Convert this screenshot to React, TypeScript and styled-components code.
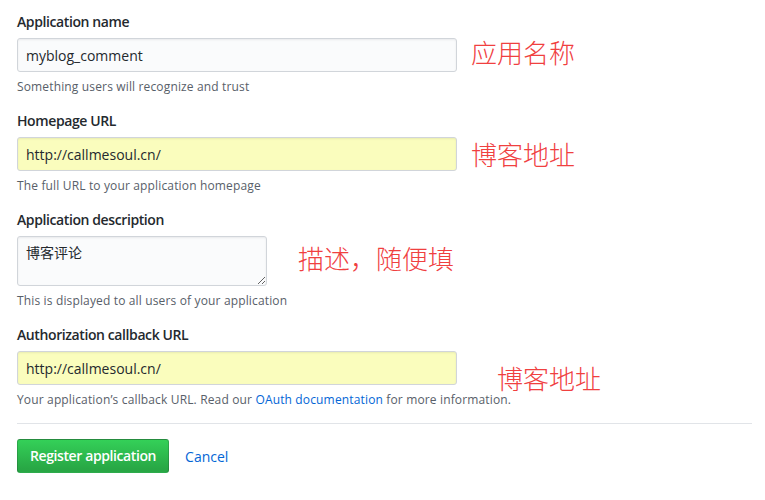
import React from "react";
import styled, { createGlobalStyle } from "styled-components";

const GlobalStyle = createGlobalStyle`
  html, body { margin: 0; padding: 0; background: #ffffff; }
  body {
    font-family: "Segoe UI", "Open Sans", "Noto Sans", "Noto Sans CJK SC", sans-serif;
    color: #24292e;
    font-size: 14px;
  }
`;

const Form = styled.form`
  width: 735px;
  margin-left: 17px;
  padding-top: 11px;
  display: flex;
  flex-direction: column;
`;

const Group = styled.div`
  display: flex;
  flex-direction: column;
  margin-bottom: 14px;
`;

const Label = styled.label`
  font-weight: 600;
  font-size: 14px;
  line-height: 21px;
  letter-spacing: -0.4px;
  margin-bottom: 6px;
  color: #24292e;
`;

const Row = styled.div`
  display: flex;
  align-items: center;
`;

const TextInput = styled.input<{ $autofill?: boolean }>`
  box-sizing: border-box;
  width: 440px;
  height: 34px;
  padding: 6px 8px;
  font: inherit;
  font-size: 14px;
  line-height: 20px;
  color: #24292e;
  background: ${(p) => (p.$autofill ? "#fafdbd" : "#fafbfc")};
  border: 1px solid #d1d5da;
  border-radius: 3px;
  box-shadow: inset 0 1px 2px rgba(27, 31, 35, 0.075);
  outline: none;
`;

const TextArea = styled.textarea`
  box-sizing: border-box;
  width: 250px;
  height: 50px;
  padding: 5px 8px;
  font: inherit;
  font-family: "Segoe UI", "Noto Sans CJK SC", sans-serif;
  font-size: 14px;
  line-height: 20px;
  color: #24292e;
  background: #fafbfc;
  border: 1px solid #d1d5da;
  border-radius: 3px;
  box-shadow: inset 0 1px 2px rgba(27, 31, 35, 0.075);
  outline: none;
  resize: both;
`;

const Annotation = styled.span<{ $gap: number; $shift?: number }>`
  margin-left: ${(p) => p.$gap}px;
  transform: translateY(${(p) => p.$shift ?? 0}px);
  font-family: "Noto Sans CJK SC", sans-serif;
  font-weight: 300;
  font-size: 26px;
  line-height: 30px;
  color: #f0403f;
  white-space: nowrap;
`;

const Note = styled.p`
  margin: 6px 0 0;
  font-size: 12px;
  line-height: 18px;
  letter-spacing: 0.15px;
  color: #586069;
`;

const Link = styled.a`
  color: #0366d6;
  text-decoration: none;
`;

const Divider = styled.hr`
  width: 100%;
  margin: 0 0 15px;
  border: 0;
  border-top: 1px solid #e1e4e8;
  height: 0;
`;

const Actions = styled.div`
  display: flex;
  align-items: center;
  gap: 16px;
`;

const PrimaryButton = styled.button`
  box-sizing: border-box;
  height: 34px;
  padding: 6px 12px;
  font: inherit;
  font-size: 14px;
  font-weight: 600;
  letter-spacing: -0.4px;
  line-height: 20px;
  color: #ffffff;
  background-image: linear-gradient(-180deg, #34d058 0%, #28a745 90%);
  border: 1px solid rgba(27, 31, 35, 0.2);
  border-radius: 3px;
  cursor: pointer;
`;

const CancelLink = styled.a`
  font-size: 14px;
  color: #0366d6;
  text-decoration: none;
`;

export default function App() {
  return (
    <>
      <GlobalStyle />
      <Form onSubmit={(e) => e.preventDefault()}>
        <Group>
          <Label>Application name</Label>
          <Row>
            <TextInput defaultValue="myblog_comment" />
            <Annotation $gap={14} $shift={-3}>应用名称</Annotation>
          </Row>
          <Note>Something users will recognize and trust</Note>
        </Group>
        <Group>
          <Label>Homepage URL</Label>
          <Row>
            <TextInput $autofill defaultValue="http://callmesoul.cn/" />
            <Annotation $gap={14}>博客地址</Annotation>
          </Row>
          <Note>The full URL to your application homepage</Note>
        </Group>
        <Group>
          <Label>Application description</Label>
          <Row>
            <TextArea defaultValue="博客评论" />
            <Annotation $gap={31} $shift={-3}>描述，随便填</Annotation>
          </Row>
          <Note>This is displayed to all users of your application</Note>
        </Group>
        <Group>
          <Label>Authorization callback URL</Label>
          <Row>
            <TextInput $autofill defaultValue="http://callmesoul.cn/" />
            <Annotation $gap={40} $shift={10}>博客地址</Annotation>
          </Row>
          <Note>
            Your application’s callback URL. Read our{" "}
            <Link href="#">OAuth documentation</Link> for more information.
          </Note>
        </Group>
        <Divider />
        <Actions>
          <PrimaryButton type="submit">Register application</PrimaryButton>
          <CancelLink href="#">Cancel</CancelLink>
        </Actions>
      </Form>
    </>
  );
}
